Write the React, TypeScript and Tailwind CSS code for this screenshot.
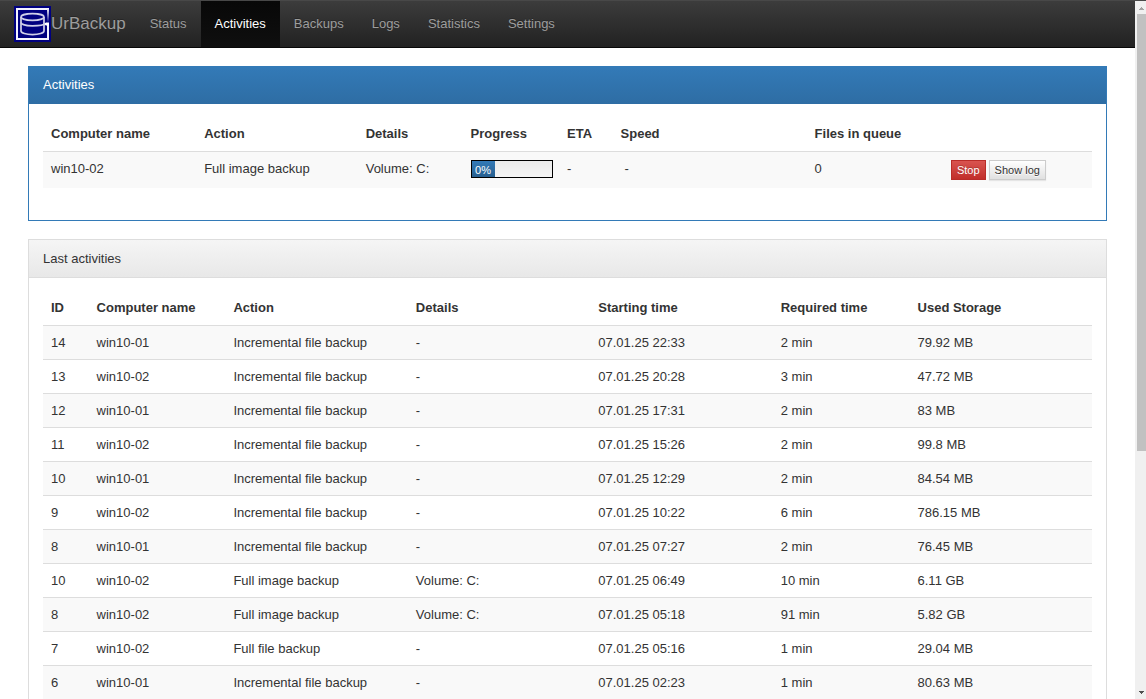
import React from "react";

const navItems = ["Status", "Activities", "Backups", "Logs", "Statistics", "Settings"];

const lastActivities: string[][] = [
  ["14", "win10-01", "Incremental file backup", "-", "07.01.25 22:33", "2 min", "79.92 MB"],
  ["13", "win10-02", "Incremental file backup", "-", "07.01.25 20:28", "3 min", "47.72 MB"],
  ["12", "win10-01", "Incremental file backup", "-", "07.01.25 17:31", "2 min", "83 MB"],
  ["11", "win10-02", "Incremental file backup", "-", "07.01.25 15:26", "2 min", "99.8 MB"],
  ["10", "win10-01", "Incremental file backup", "-", "07.01.25 12:29", "2 min", "84.54 MB"],
  ["9", "win10-02", "Incremental file backup", "-", "07.01.25 10:22", "6 min", "786.15 MB"],
  ["8", "win10-01", "Incremental file backup", "-", "07.01.25 07:27", "2 min", "76.45 MB"],
  ["10", "win10-02", "Full image backup", "Volume: C:", "07.01.25 06:49", "10 min", "6.11 GB"],
  ["8", "win10-02", "Full image backup", "Volume: C:", "07.01.25 05:18", "91 min", "5.82 GB"],
  ["7", "win10-02", "Full file backup", "-", "07.01.25 05:16", "1 min", "29.04 MB"],
  ["6", "win10-01", "Incremental file backup", "-", "07.01.25 02:23", "1 min", "80.63 MB"],
];

const currentColumns = [
  { label: "Computer name", width: "w-[14.6%]" },
  { label: "Action", width: "w-[15.4%]" },
  { label: "Details", width: "w-[10%]" },
  { label: "Progress", width: "w-[9.2%]" },
  { label: "ETA", width: "w-[5.1%]" },
  { label: "Speed", width: "w-[18.5%]" },
  { label: "Files in queue", width: "w-[13%]" },
  { label: "", width: "w-[14.2%]" },
];

const lastColumns = [
  { label: "ID", width: "w-1/23" },
  { label: "Computer name", width: "w-3/23" },
  { label: "Action", width: "w-4/23" },
  { label: "Details", width: "w-4/23" },
  { label: "Starting time", width: "w-4/23" },
  { label: "Required time", width: "w-3/23" },
  { label: "Used Storage", width: "w-4/23" },
];

function Logo() {
  return (
    <svg viewBox="0 0 37 36" className="h-9 w-[37px] shrink-0" aria-hidden="true">
      <defs>
        <linearGradient id="fade" x1="0" y1="0" x2="0" y2="1">
          <stop offset="0" stopColor="#fff" />
          <stop offset="1" stopColor="#fff" stopOpacity="0.05" />
        </linearGradient>
      </defs>
      <rect width="37" height="36" fill="#000080" />
      <path d="M33 3H3v30h31V18" fill="none" stroke="#f4f4ff" strokeWidth="2" />
      <rect x="33" y="2" width="2" height="14" fill="url(#fade)" />
      <path d="M29.5 18 32 16.500h3v3h-3z" fill="#fff" />
      <g fill="none" stroke="#cfcfe8" strokeWidth="1.7">
        <ellipse cx="18.500" cy="11" rx="11.500" ry="3.300" />
        <path d="M7 11v14c0 2 5 3.600 11.500 3.600S30 27 30 25V11" />
        <path d="M7 16.500c0 2 5 3.300 11.500 3.300S30 19 30.500 17.900" />
      </g>
    </svg>
  );
}

function TableHead({ columns }: { columns: { label: string; width: string }[] }) {
  return (
    <thead>
      <tr>
        {columns.map((c) =>
          c.label ? (
            <th key={c.label} scope="col" className={`${c.width} px-2 pt-[7px] pb-2 text-left font-bold`}>
              {c.label}
            </th>
          ) : (
            <td key="actions" className={c.width} />
          ),
        )}
      </tr>
    </thead>
  );
}

function Panel({ title, primary, children }: { title: string; primary?: boolean; children: React.ReactNode }) {
  return (
    <section className={`border bg-white ${primary ? "border-[#337ab7]" : "border-[#ddd]"}`}>
      <h2
        className={`px-3.5 text-[13px] leading-[18px] ${
          primary
            ? "bg-linear-to-b from-[#337ab7] to-[#2e6da4] pt-[9px] pb-2.5 text-white"
            : "border-b border-[#ddd] bg-linear-to-b from-[#f5f5f5] to-[#e8e8e8] pt-2.5 pb-[9px]"
        }`}
      >
        {title}
      </h2>
      <div className="p-3.5">{children}</div>
    </section>
  );
}

export default function App() {
  return (
    <div className="flex h-screen flex-col border-t border-[#484848] bg-white font-['Liberation_Sans',Arial,sans-serif] text-[13px] leading-[18px] text-[#333]">
      <div className="flex min-h-0 flex-1">
        <div className="min-w-0 flex-1 overflow-y-auto [scrollbar-width:none]">
          <nav className="flex h-[47px] border-b border-[#080808] bg-linear-to-b from-[#3c3c3c] to-[#222] text-[#9d9d9d] [text-shadow:0_-1px_0_rgba(0,0,0,0.25)]">
            <a href="#home" className="flex items-center pr-2.5 pl-3.5 text-[17px]">
              <Logo />
              UrBackup
            </a>
            {navItems.map((item) => (
              <a
                key={item}
                href={`#${item.toLowerCase()}`}
                className={`flex items-center px-3.5 ${
                  item === "Activities" ? "bg-linear-to-b from-[#080808] to-[#0f0f0f] text-white" : ""
                }`}
              >
                {item}
              </a>
            ))}
          </nav>

          <main className="flex flex-col gap-[18px] px-7 pt-[18px]">
            <Panel title="Activities" primary>
              <table className="mb-[18px] w-full table-fixed border-collapse">
                <TableHead columns={currentColumns} />
                <tbody>
                  <tr className="border-t border-[#ddd] bg-[#f9f9f9] align-top">
                    <td className="p-2">win10-02</td>
                    <td className="p-2">Full image backup</td>
                    <td className="p-2">Volume: C:</td>
                    <td className="p-2">
                      <div
                        role="progressbar"
                        aria-label="Progress"
                        aria-valuenow={0}
                        className="flex h-[18px] w-[82px] border border-black bg-linear-to-b from-[#ebebeb] to-[#f5f5f5] text-[11px]"
                      >
                        <span className="w-[23px] bg-linear-to-b from-[#337ab7] to-[#286090] text-center text-white">0%</span>
                      </div>
                    </td>
                    <td className="p-2">-</td>
                    <td className="px-3 py-2">-</td>
                    <td className="p-2">0</td>
                    <td className="p-2">
                      <div className="flex gap-[3px] text-[11px]">
                        <button
                          type="button"
                          className="h-5 border border-[#b92c28] bg-linear-to-b from-[#d9534f] to-[#c12e2a] px-[5px] text-white [text-shadow:0_-1px_0_rgba(0,0,0,0.2)]"
                        >
                          Stop
                        </button>
                        <button
                          type="button"
                          className="h-5 border border-[#ccc] bg-linear-to-b from-white to-[#e0e0e0] px-[5px] whitespace-nowrap shadow-[0_1px_1px_rgba(0,0,0,0.08)] [text-shadow:0_1px_0_#fff]"
                        >
                          Show log
                        </button>
                      </div>
                    </td>
                  </tr>
                </tbody>
              </table>
            </Panel>

            <Panel title="Last activities">
              <table className="w-full table-fixed border-collapse">
                <TableHead columns={lastColumns} />
                <tbody>
                  {lastActivities.map((row, i) => (
                    <tr key={i} className="border-t border-[#ddd] odd:bg-[#f9f9f9]">
                      {row.map((cell, j) => (
                        <td key={j} className="px-2 pt-2 pb-[7px]">
                          {cell}
                        </td>
                      ))}
                    </tr>
                  ))}
                </tbody>
              </table>
            </Panel>
          </main>
        </div>

        <div aria-hidden="true" className="flex w-[11px] shrink-0 flex-col bg-[#f0f0f0]">
          <svg viewBox="0 0 11 13" className="h-[13px] w-[11px] shrink-0" shapeRendering="crispEdges">
            <path d="M6 6h1v1h1v1h1v1H4V8h1V7h1z" fill="#a3a3a3" />
          </svg>
          <div className="min-h-0 flex-1 pl-0.5">
            <div className="h-[65%] bg-[#c1c1c1]" />
          </div>
          <svg viewBox="0 0 11 13" className="h-[13px] w-[11px] shrink-0" shapeRendering="crispEdges">
            <path d="M4 5h5v1H8v1H7v1H6V7H5V6H4z" fill="#505050" />
          </svg>
        </div>
      </div>
    </div>
  );
}
